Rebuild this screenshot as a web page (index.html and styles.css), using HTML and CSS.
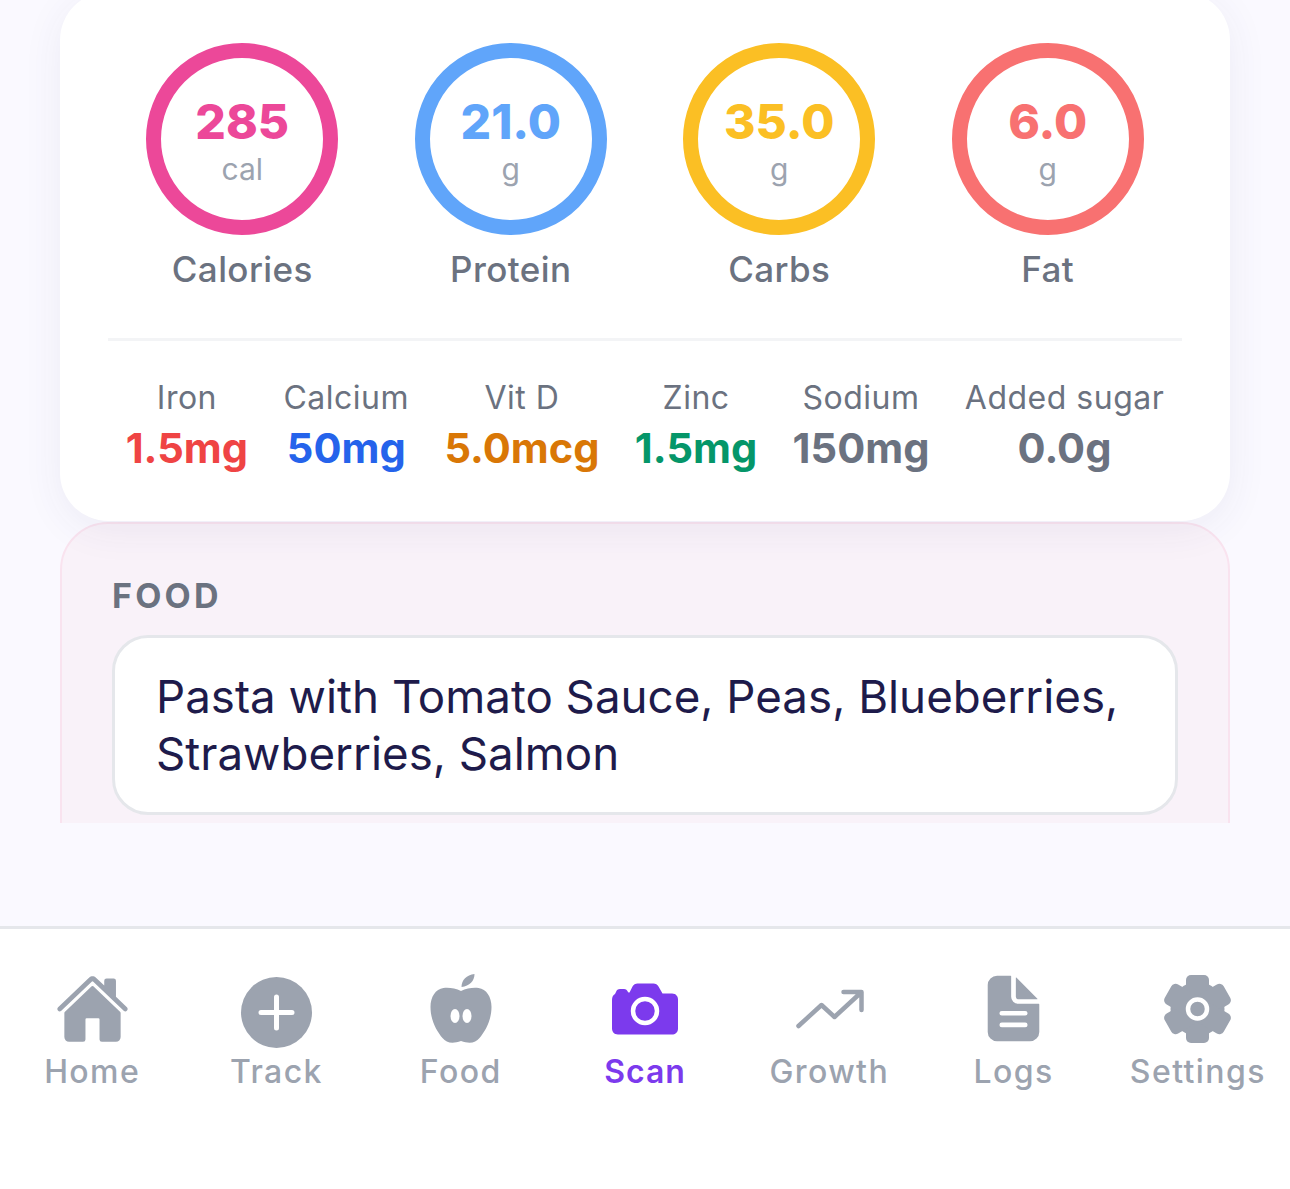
FILE: index.html
```html
<!DOCTYPE html>
<html lang="en">
<head>
    <meta charset="UTF-8">
    <meta name="viewport" content="width=device-width, initial-scale=1.0">
    <title>Scan</title>
    <link rel="stylesheet" href="styles.css">
</head>
<body>

<main class="content">
    <section class="summary">
        <div class="rings">
            <div class="ring-item">
                <div class="ring ring-calories"><span class="ring-value">285</span><span class="ring-unit">cal</span></div>
                <div class="ring-label">Calories</div>
            </div>
            <div class="ring-item">
                <div class="ring ring-protein"><span class="ring-value">21.0</span><span class="ring-unit">g</span></div>
                <div class="ring-label">Protein</div>
            </div>
            <div class="ring-item">
                <div class="ring ring-carbs"><span class="ring-value">35.0</span><span class="ring-unit">g</span></div>
                <div class="ring-label">Carbs</div>
            </div>
            <div class="ring-item">
                <div class="ring ring-fat"><span class="ring-value">6.0</span><span class="ring-unit">g</span></div>
                <div class="ring-label">Fat</div>
            </div>
        </div>
        <div class="micros">
            <div class="micro"><span class="micro-label">Iron</span><span class="micro-value red">1.5mg</span></div>
            <div class="micro"><span class="micro-label">Calcium</span><span class="micro-value blue">50mg</span></div>
            <div class="micro"><span class="micro-label">Vit D</span><span class="micro-value orange">5.0mcg</span></div>
            <div class="micro"><span class="micro-label">Zinc</span><span class="micro-value green">1.5mg</span></div>
            <div class="micro"><span class="micro-label">Sodium</span><span class="micro-value gray">150mg</span></div>
            <div class="micro"><span class="micro-label">Added sugar</span><span class="micro-value gray">0.0g</span></div>
        </div>
    </section>

    <div class="food-clip">
        <section class="food">
            <div class="food-title">FOOD</div>
            <div class="food-box">Pasta with Tomato Sauce, Peas, Blueberries, Strawberries, Salmon</div>
        </section>
    </div>
</main>

<nav class="tabbar">
    <div class="tab">
        <svg class="tab-icon" viewBox="0 24 512 512"><path d="M261.56 101.28a8 8 0 00-11.06 0L66.4 277.15a8 8 0 00-2.47 5.79L63.9 448a32 32 0 0032 32H192a16 16 0 0016-16V328a8 8 0 018-8h80a8 8 0 018 8v136a16 16 0 0016 16h96.06a32 32 0 0032-32V282.94a8 8 0 00-2.47-5.79z"/><path d="M490.91 244.15l-74.8-71.56V64a16 16 0 00-16-16h-48a16 16 0 00-16 16v32l-57.92-55.38C272.77 35.14 264.71 32 256 32c-8.68 0-16.7 3.14-22.14 8.63l-212.7 203.5c-6.22 6-7 15.87-1.34 22.37A16 16 0 0043 267.56L250.5 69.28a8 8 0 0111.06 0l207.52 198.28a16 16 0 0022.59-.44c6.14-6.36 5.63-16.86-.76-22.97z"/></svg>
        <span>Home</span>
    </div>
    <div class="tab">
        <svg class="tab-icon" viewBox="0 0 75 75"><circle cx="37.5" cy="37.5" r="35.5"/><path class="cut" d="M37.5 22v31M22 37.5h31"/></svg>
        <span>Track</span>
    </div>
    <div class="tab">
        <svg class="tab-icon" viewBox="-7.5 1 75 75"><path d="M30.5 17C25 14 18 13.5 13 14 5 15 0 23 0 33c0 13 6 24 12 31 4 5 10 6 18.5 3 8.5 3 14.5 2 18.5-3 6-7 12-18 12-31 0-10-5-18-13-19-5-.5-12 0-17.5 3z"/><path d="M31 13c0-7 5-12 13-13 0 7-5 12-13 13z"/><ellipse class="hole" cx="24.5" cy="42" rx="4.5" ry="7"/><ellipse class="hole" cx="36.5" cy="42" rx="4.5" ry="7"/></svg>
        <span>Food</span>
    </div>
    <div class="tab active">
        <svg class="tab-icon" viewBox="0 -2 75 75"><path d="M5 23c0-3 1-5 3-6l1-2c.5-2 2-3 4-3h4c2 0 3 1 4 3l.5.5h1l3-6c1-2 3-3 5-3h16c2 0 4 1 5 3l4 7H65c4 0 6 3 6 6v29c0 4-3 6-6 6H11c-4 0-6-3-6-6z"/><circle class="ring-cut" cx="38" cy="34" r="12"/></svg>
        <span>Scan</span>
    </div>
    <div class="tab">
        <svg class="tab-icon" viewBox="0 -2 75 75"><path class="line" d="M6.5 49l23-21 13 12 26-24M51.5 15h18v18"/></svg>
        <span>Growth</span>
    </div>
    <div class="tab">
        <svg class="tab-icon" viewBox="0 27 512 512"><path d="M428 224H288a48 48 0 01-48-48V36a4 4 0 00-4-4h-92a64 64 0 00-64 64v320a64 64 0 0064 64h224a64 64 0 0064-64V228a4 4 0 00-4-4zm-92 160H176a16 16 0 010-32h160a16 16 0 010 32zm0-80H176a16 16 0 010-32h160a16 16 0 010 32z"/><path d="M419.22 188.59L275.41 44.78a2 2 0 00-3.41 1.41V176a16 16 0 0016 16h129.81a2 2 0 001.41-3.41z"/></svg>
        <span>Logs</span>
    </div>
    <div class="tab">
        <svg class="tab-icon" viewBox="-37.5 -34 75 75"><circle r="27"/><rect x="-11.5" y="-34" width="23" height="68" rx="5"/><rect x="-11.5" y="-34" width="23" height="68" rx="5" transform="rotate(60)"/><rect x="-11.5" y="-34" width="23" height="68" rx="5" transform="rotate(120)"/><circle class="ring-cut" r="9.5"/></svg>
        <span>Settings</span>
    </div>
</nav>

</body>
</html>
```
FILE: styles.css
```css
body {
    font-family: 'Inter', sans-serif;
    margin: 0;
    padding: 0;
    background-color: #faf9ff;
    color: #1e1b4b;
}
.content {
    height: 926px;
    padding: 0 60px;
    overflow: hidden;
}

/* nutrition card */
.summary {
    background-color: white;
    border-radius: 48px;
    margin-top: -8px;
    padding: 51px 48px 0;
    height: 478px;
    box-shadow: 0 8px 40px rgba(60,50,110,0.07);
    position: relative;
    z-index: 1;
}
.rings {
    display: grid;
    grid-template-columns: repeat(4, 1fr);
    padding-bottom: 47px;
    border-bottom: 3px solid #f3f4f6;
}
.ring-item {
    display: flex;
    flex-direction: column;
    align-items: center;
}
.ring {
    width: 192px;
    height: 192px;
    box-sizing: border-box;
    border: 15px solid;
    border-radius: 50%;
    padding-top: 13px;
    display: flex;
    flex-direction: column;
    align-items: center;
    justify-content: center;
}
.ring-calories { border-color: #ec4899; color: #ec4899; }
.ring-protein { border-color: #60a5fa; color: #60a5fa; }
.ring-carbs { border-color: #fbbf24; color: #fbbf24; }
.ring-fat { border-color: #f87171; color: #f87171; }
.ring-value {
    font-size: 48px;
    font-weight: 800;
    line-height: 56px;
    margin-top: -10px;
}
.ring-unit {
    font-size: 30px;
    color: #9ca3af;
    line-height: 38px;
}
.ring-label {
    font-size: 35px;
    font-weight: 500;
    letter-spacing: 0.4px;
    color: #6b7280;
    line-height: 44px;
    margin-top: 12px;
}
.micros {
    display: flex;
    justify-content: space-around;
    padding-top: 38px;
}
.micro {
    display: flex;
    flex-direction: column;
    align-items: center;
}
.micro-label {
    font-size: 32px;
    letter-spacing: 0.5px;
    color: #6b7280;
    line-height: 38px;
}
.micro-value {
    font-size: 41.6px;
    font-weight: 700;
    line-height: 48px;
    margin-top: 7px;
}
.red { color: #ef4444; }
.blue { color: #2563eb; }
.orange { color: #d97706; }
.green { color: #059669; }
.gray { color: #6b7280; }

/* food section, cut off by the scroll area */
.food-clip {
    height: 301px;
    margin-top: 1px;
    overflow: hidden;
}
.food {
    background-color: #f9f2f9;
    border: 2px solid #f9e3ef;
    border-radius: 48px;
    padding: 50px 50px 40px;
    height: 400px;
    box-sizing: border-box;
}
.food-title {
    font-size: 34px;
    font-weight: 700;
    letter-spacing: 3.2px;
    color: #6b7280;
    line-height: 44px;
    margin-bottom: 17px;
}
.food-box {
    background-color: white;
    border: 3px solid #e5e7eb;
    border-radius: 36px;
    padding: 30px 41px 30px;
    font-size: 45.7px;
    line-height: 57px;
    color: #1e1b4b;
}

/* bottom nav */
.tabbar {
    display: flex;
    height: 263px;
    box-sizing: border-box;
    background-color: white;
    border-top: 3px solid #e5e7eb;
    padding-top: 46px;
}
.tab {
    flex: 1;
    display: flex;
    flex-direction: column;
    align-items: center;
    font-size: 32px;
    font-weight: 500;
    letter-spacing: 1.4px;
    line-height: 38px;
    color: #9ca3af;
}
.tab-icon {
    width: 75px;
    height: 75px;
    fill: #9ca3af;
    overflow: visible;
    margin-bottom: 3px;
}
.tab.active { color: #7c3aed; font-weight: 600; letter-spacing: 1px; }
.tab.active .tab-icon { fill: #7c3aed; }
.cut {
    fill: none;
    stroke: white;
    stroke-width: 5px;
    stroke-linecap: round;
}
.hole { fill: white; }
.line {
    fill: none;
    stroke: #9ca3af;
    stroke-width: 4.5px;
    stroke-linecap: round;
    stroke-linejoin: round;
}
.ring-cut {
    stroke: white;
    stroke-width: 4.5px;
}
```
